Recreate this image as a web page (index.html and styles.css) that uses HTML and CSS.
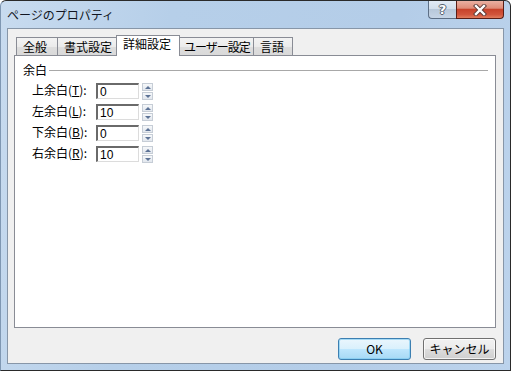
FILE: index.html
```html
<!DOCTYPE html>
<html lang="ja">
<head>
<meta charset="utf-8">
<title>ページのプロパティ</title>
<link rel="stylesheet" href="styles.css">
</head>
<body>
<div class="window">
  <div class="titlebar">
    <div class="title">ページのプロパティ</div>
    <div class="caption-buttons">
      <div class="cap-btn help"><span class="help-glyph">?</span></div>
      <div class="cap-btn close">
        <svg width="14" height="12" viewBox="0 0 14 12">
          <path d="M3 2 L11 10 M11 2 L3 10" stroke="#5a3a36" stroke-width="4.2" stroke-linecap="square"/>
          <path d="M3 2 L11 10 M11 2 L3 10" stroke="#ffffff" stroke-width="2.4" stroke-linecap="square"/>
        </svg>
      </div>
    </div>
  </div>
  <div class="client">
    <div class="tabs">
      <div class="tab tab-w1">全般</div>
      <div class="tab tab-w2">書式設定</div>
      <div class="tab tab-w3 selected">詳細設定</div>
      <div class="tab tab-w4">ユーザー設定</div>
      <div class="tab tab-w5">言語</div>
    </div>
    <div class="panel">
      <div class="group-head">
        <span class="group-label">余白</span>
        <span class="group-line"></span>
      </div>
      <div class="rows">
        <div class="row">
          <span class="label">上余白(<u>T</u>):</span>
          <span class="input">0</span>
          <span class="spin"><span class="spin-up"></span><span class="spin-down"></span></span>
        </div>
        <div class="row">
          <span class="label">左余白(<u>L</u>):</span>
          <span class="input">10</span>
          <span class="spin"><span class="spin-up"></span><span class="spin-down"></span></span>
        </div>
        <div class="row">
          <span class="label">下余白(<u>B</u>):</span>
          <span class="input">0</span>
          <span class="spin"><span class="spin-up"></span><span class="spin-down"></span></span>
        </div>
        <div class="row">
          <span class="label">右余白(<u>R</u>):</span>
          <span class="input">10</span>
          <span class="spin"><span class="spin-up"></span><span class="spin-down"></span></span>
        </div>
      </div>
    </div>
    <div class="buttons">
      <div class="btn default">OK</div>
      <div class="btn">キャンセル</div>
    </div>
  </div>
</div>
</body>
</html>
```
FILE: styles.css
```css
html, body {
  margin: 0;
  padding: 0;
  background: #ffffff;
}

.window {
  width: 511px;
  height: 371px;
  box-sizing: border-box;
  border: 1px solid #2a2a2a;
  border-left-color: #7f97b2;
  border-radius: 6px 6px 0 0;
  background: linear-gradient(100deg, #c8dbef 0%, #b6cfe9 30%, #b4cde8 70%, #bcd3ec 100%);
  display: flex;
  flex-direction: column;
  font-family: "Noto Sans CJK JP", "Noto Sans", sans-serif;
  font-size: 12px;
  color: #000;
  overflow: hidden;
}

.titlebar {
  height: 27px;
  flex: none;
  display: flex;
  align-items: flex-start;
  padding: 0 6px 0 6px;
}

.title {
  margin-top: 7px;
  line-height: 14px;
  font-size: 12px;
  color: #111522;
}

.caption-buttons {
  margin-left: auto;
  display: flex;
}

.cap-btn {
  height: 18px;
  box-sizing: border-box;
  display: flex;
  align-items: center;
  justify-content: center;
  border: 1px solid #5d6f85;
  border-top: none;
}

.help {
  width: 28px;
  border-right: none;
  border-radius: 0 0 0 4px;
  background: linear-gradient(#e2ebf5 0%, #d3dfec 45%, #b8c8da 50%, #c6d5e6 100%);
}

.help-glyph {
  font-family: "DejaVu Sans", sans-serif;
  font-weight: bold;
  font-size: 13px;
  line-height: 14px;
  color: #ffffff;
  text-shadow: 1px 0 0 #55606e, -1px 0 0 #55606e, 0 1px 0 #55606e, 0 -1px 0 #55606e;
}

.close {
  width: 48px;
  border-color: #5a1e16;
  border-radius: 0 0 4px 0;
  background: linear-gradient(#eab0a2 0%, #df8c78 42%, #c8432b 50%, #d2553c 80%, #e17d5e 100%);
}

.client {
  flex: 1;
  margin: 0 6px 6px 6px;
  border: 1px solid #8796a8;
  background: #f0f0f0;
  display: flex;
  flex-direction: column;
  padding: 7px 7px 3px 6px;
}

.tabs {
  height: 19px;
  flex: none;
  display: flex;
  align-items: flex-end;
  margin-left: 2px;
  position: relative;
  z-index: 1;
}

.tab {
  height: 17px;
  box-sizing: content-box;
  border: 1px solid #898c95;
  border-bottom: none;
  border-right: none;
  background: linear-gradient(#f3f3f3 0%, #ebebeb 50%, #dedede 51%, #d9d9d9 100%);
  padding-left: 6px;
  line-height: 17px;
  white-space: nowrap;
}

.tab:last-child {
  border-right: 1px solid #898c95;
}

.tab.selected {
  height: 19px;
  margin-bottom: -1px;
  background: #ffffff;
  line-height: 16px;
  padding-bottom: 1px;
  border-right: 1px solid #898c95;
  padding-left: 6px;
}

.tab.selected + .tab {
  border-left: none;
}

.tab-w1 { width: 34px; }
.tab-w2 { width: 52px; }
.tab-w3 { width: 56px; }
.tab-w4 {
  width: 69px;
  padding-left: 4px;
  letter-spacing: -1px;
}
.tab-w5 { width: 32px; }

.panel {
  flex: 1;
  border: 1px solid #898c95;
  background: #ffffff;
  padding: 7px 7px 0 8px;
}

.group-head {
  display: flex;
  align-items: center;
  height: 14px;
}

.group-label {
  line-height: 14px;
}

.group-line {
  flex: 1;
  height: 0;
  border-top: 1px solid #a8a8a8;
  margin-left: 2px;
  margin-top: 1px;
}

.rows {
  margin-top: 5px;
  padding-left: 9px;
  display: flex;
  flex-direction: column;
  gap: 4px;
}

.row {
  display: flex;
  align-items: flex-start;
  height: 17px;
}

.label {
  width: 64px;
  line-height: 16px;
}

.label u {
  text-decoration: underline;
  text-underline-offset: 1px;
}

.input {
  width: 38px;
  height: 12px;
  border-top: 2px solid #6a6a6a;
  border-left: 2px solid #6a6a6a;
  border-right: 1px solid #dcdcdc;
  border-bottom: 1px solid #dcdcdc;
  background: #ffffff;
  font-family: "Liberation Sans", sans-serif;
  font-size: 12px;
  line-height: 13px;
  padding: 1px 0 0 2px;
  margin-top: 1px;
}

.spin {
  margin-left: 3px;
  margin-top: 1px;
  display: flex;
  flex-direction: column;
  gap: 1px;
}

.spin-up, .spin-down {
  width: 9px;
  height: 6px;
  border: 1px solid #c6cdd6;
  background: linear-gradient(#f6f8fa, #e2e7ee);
  display: flex;
  align-items: center;
  justify-content: center;
}

.spin-up::after {
  content: "";
  border-left: 3px solid transparent;
  border-right: 3px solid transparent;
  border-bottom: 3px solid #5d7396;
}

.spin-down::after {
  content: "";
  border-left: 3px solid transparent;
  border-right: 3px solid transparent;
  border-top: 3px solid #5d7396;
}

.buttons {
  flex: none;
  display: flex;
  justify-content: flex-end;
  gap: 12px;
  margin-top: 10px;
}

.btn {
  width: 73px;
  height: 22px;
  box-sizing: border-box;
  border: 1px solid #707070;
  border-radius: 3px;
  background: linear-gradient(#f2f2f2 0%, #ebebeb 50%, #dddddd 51%, #cfcfcf 100%);
  box-shadow: inset 0 0 0 1px rgba(255, 255, 255, 0.75);
  display: flex;
  align-items: center;
  justify-content: center;
  line-height: 14px;
}

.btn.default {
  border-color: #3c7fb1;
  background: linear-gradient(#eaf6fd 0%, #d9f0fc 50%, #bee6fd 51%, #a7d9f5 100%);
  box-shadow: inset 0 0 0 1px rgba(120, 200, 240, 0.6);
}
```
